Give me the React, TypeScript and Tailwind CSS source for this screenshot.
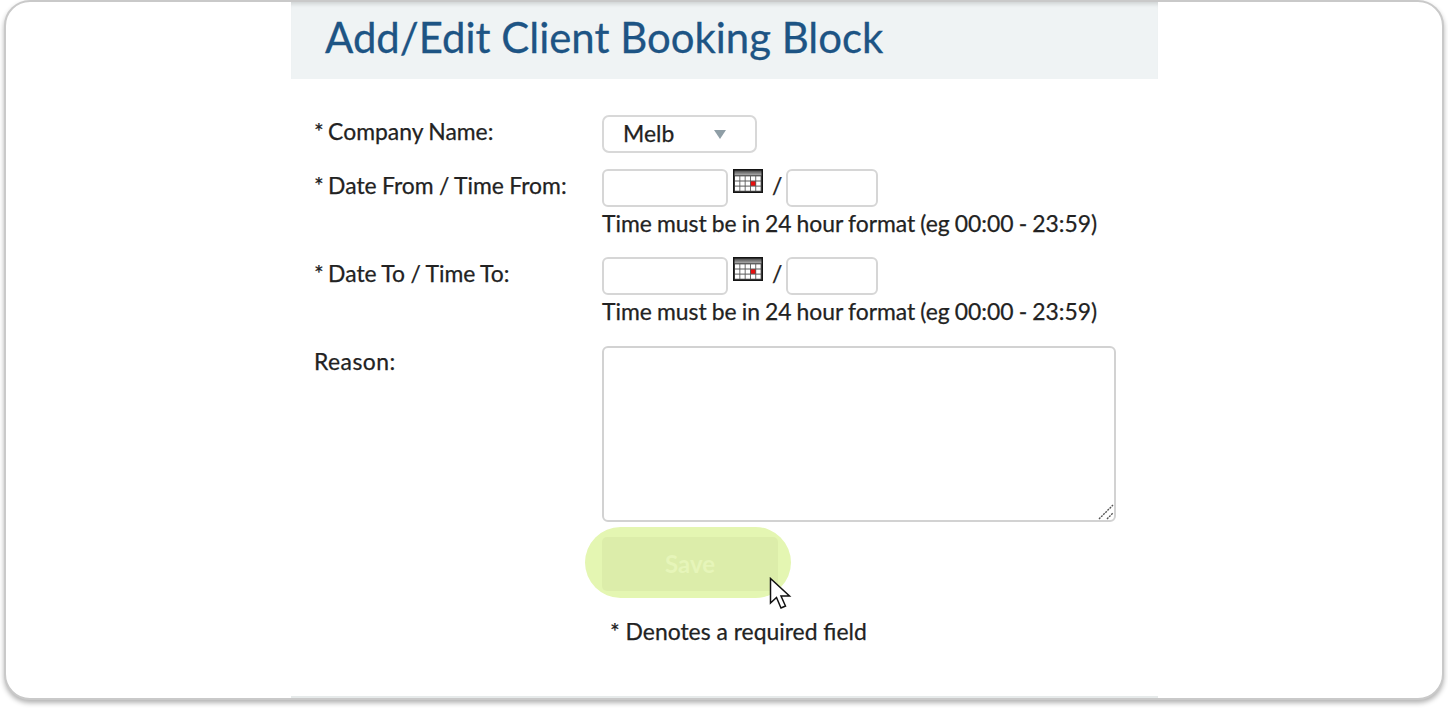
import React from 'react';

function CalendarIcon() {
  const cells = [];
  for (let row = 0; row < 3; row++) {
    for (let col = 0; col < 5; col++) {
      cells.push(
        <rect
          key={`${row}-${col}`}
          x={2 + col * 5.3}
          y={7.4 + row * 5.1}
          width={4.4}
          height={4.1}
          fill={row === 1 && col === 3 ? '#e80f0f' : '#ffffff'}
        />
      );
    }
  }
  return (
    <svg width="30" height="24" viewBox="0 0 30 24" className="block shrink-0">
      <defs>
        <linearGradient id="calTop" x1="0" y1="0" x2="0" y2="1">
          <stop offset="0" stopColor="#4a4a4a" />
          <stop offset="1" stopColor="#b5b5b5" />
        </linearGradient>
      </defs>
      <rect width="30" height="24" fill="#141414" />
      <rect x="1.5" y="1.5" width="27" height="5" fill="url(#calTop)" />
      <rect x="1.5" y="6.5" width="27" height="16" fill="#5a5a5a" />
      {cells}
    </svg>
  );
}

function FieldLabel({ text }: { text: string }) {
  return (
    <div className="w-[288px] pt-[2px] leading-[28px]">
      <span className="mr-[-1px]">*</span> {text}
    </div>
  );
}

function DateTimeRow({ label }: { label: string }) {
  return (
    <div className="flex">
      <FieldLabel text={label} />
      <div>
        <div className="flex items-start">
          <input className="h-[38px] w-[126px] rounded-[6px] border-2 border-[#d6d6d6] bg-white" />
          <div className="ml-[5px]">
            <CalendarIcon />
          </div>
          <span className="ml-[9px] w-[14px] pt-[2px] leading-[28px]">/</span>
          <input className="h-[38px] w-[92px] rounded-[6px] border-2 border-[#d6d6d6] bg-white" />
        </div>
        <div className="mt-[2px] leading-[28px] [word-spacing:-0.8px]">Time must be in 24 hour format (eg 00:00 - 23:59)</div>
      </div>
    </div>
  );
}

export default function App() {
  return (
    <div className="h-[708px] w-[1448px] overflow-hidden bg-white font-['Lato',sans-serif] text-[22.9px] text-[#222222] [word-spacing:-0.5px] [-webkit-text-stroke:0.25px_#222222]">
      <div className="h-[700px] w-[1440px] translate-x-[4px] rounded-[26px] border-2 border-[#c9c9c9] bg-white shadow-[0_3px_5px_rgba(0,0,0,0.3)]">
        <div className="relative ml-[285px] h-[696px] w-[867px] border-b-2 border-[#e6eaea]">
          {/* Title */}
          <div className="flex h-[77px] items-center bg-[#eff3f4] pb-[6px] pl-[34px] shadow-[inset_0_5px_4px_-3px_rgba(0,0,0,0.14)]">
            <h1 className="text-[41.9px] leading-none font-normal text-[#1d5484] [word-spacing:0] [-webkit-text-stroke:0.3px_#1d5484]">Add/Edit Client Booking Block</h1>
          </div>

          {/* Form */}
          <div className="pt-[36px] pl-[23px]">
            <div className="flex">
              <FieldLabel text="Company Name:" />
              <div className="flex h-[38px] w-[155px] items-center rounded-[7px] border-2 border-[#d8d8d8] pb-[1px] pl-[19px]">
                <span className="w-[91px]">Melb</span>
                <span className="mt-[1px] h-0 w-0 border-x-[6px] border-t-[9px] border-x-transparent border-t-[#8f9ea6]" />
              </div>
            </div>

            <div className="mt-[16px]">
              <DateTimeRow label="Date From / Time From:" />
            </div>
            <div className="mt-[20px]">
              <DateTimeRow label="Date To / Time To:" />
            </div>

            <div className="mt-[21px] flex">
              <div className="w-[288px] pt-[1px] leading-[28px] [letter-spacing:0.02em]">Reason:</div>
              <div className="relative">
                <textarea className="block h-[176px] w-[514px] resize-none rounded-[6px] border-2 border-[#d2d2d2] bg-white" />
                <svg width="16" height="16" viewBox="0 0 16 16" className="absolute right-[2px] bottom-[2px]">
                  <path d="M1 15 L15 1 M9 15 L15 9" stroke="#555555" strokeWidth="1.4" strokeDasharray="2 1" fill="none" />
                </svg>
              </div>
            </div>

            <div className="relative mt-[15px] ml-[288px]">
              {/* Highlight sits behind the button */}
              <div className="absolute top-[-10px] left-[-17px] h-[71px] w-[206px] rounded-full bg-[#e4f6b2]" />
              <button className="relative h-[54px] w-[176px] rounded-[5px] bg-[#dcedaa] text-[24px] font-bold text-[#e6f5b9] [-webkit-text-stroke:0]">Save</button>
            </div>

            <div className="mt-[26px] ml-[296px] leading-[28px] [word-spacing:0]">* Denotes a required field</div>
          </div>

          {/* Cursor */}
          <svg width="24" height="34" viewBox="0 0 24 34" className="absolute top-[575px] left-[478px]">
            <path d="M1.5 1.5 L1.5 26 L7.5 20.5 L12 31 L16.5 29 L12 19 L20.5 19 Z" fill="#ffffff" stroke="#111111" strokeWidth="1.5" strokeLinejoin="miter" />
          </svg>
        </div>
      </div>
    </div>
  );
}
